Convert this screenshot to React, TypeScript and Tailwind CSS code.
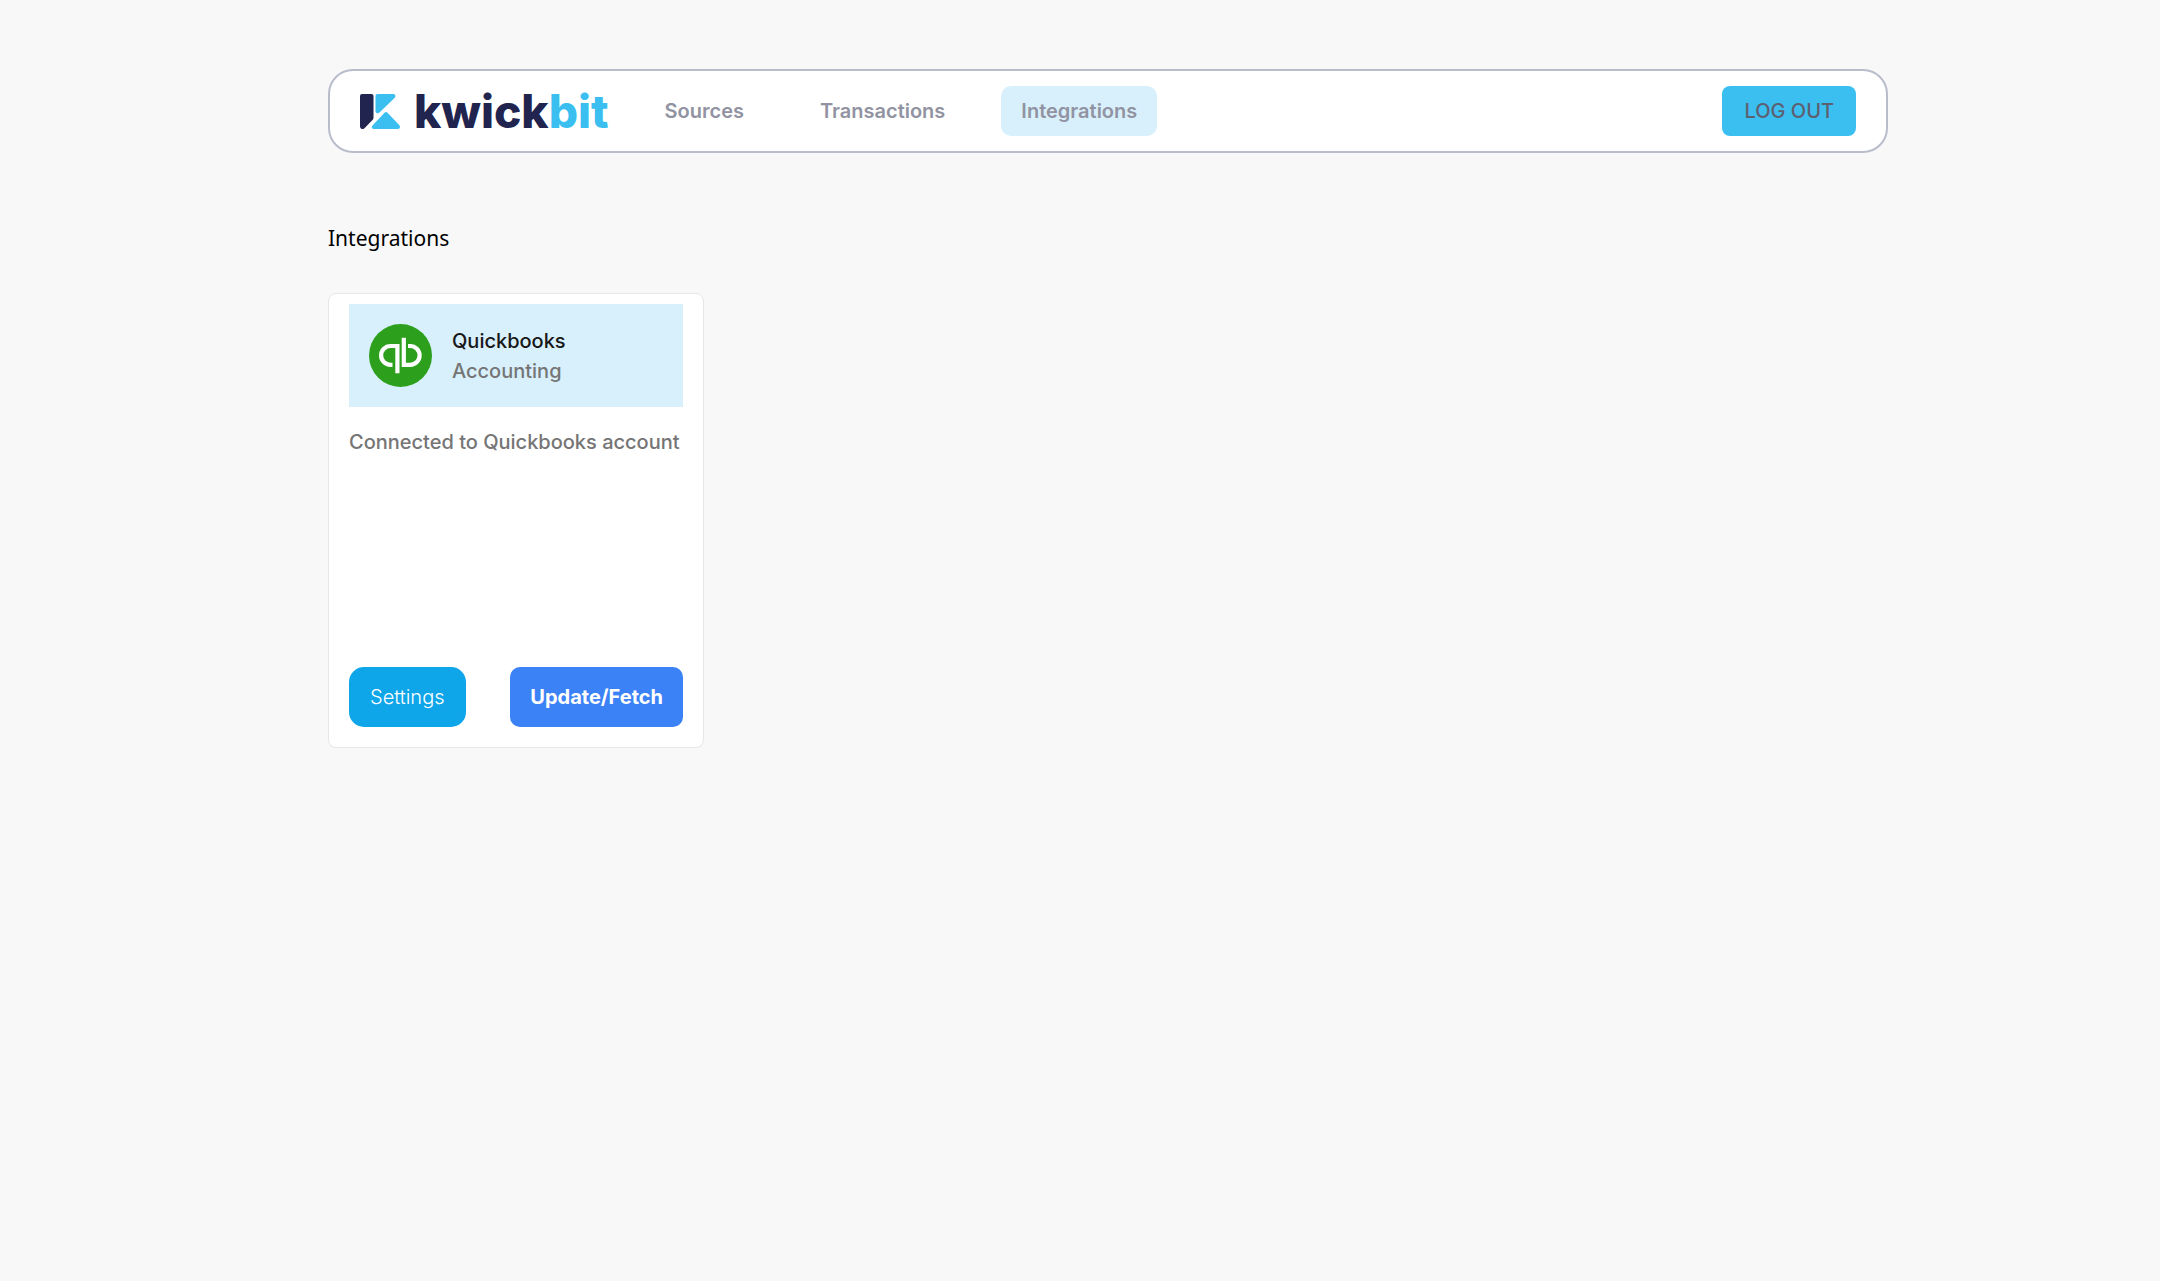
import React from 'react';

const navItems = [
  { label: 'Sources', active: false },
  { label: 'Transactions', active: false },
  { label: 'Integrations', active: true },
];

function Logo() {
  return (
    <a href="#" aria-label="kwickbit" className="flex items-center gap-3.5">
      <svg width="40" height="35" viewBox="0 0 40 35" aria-hidden="true">
        <path d="M2 0H11.5Q13.5 0 13.5 2V23.5Q13.5 25 12.5 26L4.5 34.3Q2.8 35.6 1.2 34.8Q0 34 0 32.5V2Q0 0 2 0Z" fill="#21244e" />
        <path d="M17.5 0H33.5Q35.2 .2 35.4 1.8Q35.4 3 34.5 3.9L19.5 18.6Q18 19.8 16.6 19Q15.5 18.3 15.5 17V2Q15.5 0 17.5 0Z" fill="#3bbff0" />
        <path d="M24.5 18.7Q26 17.5 27.5 18.7L39.2 31Q40.4 32.3 39.8 33.7Q39.2 35 37.8 35H13.7Q12 34.8 11.8 33.5Q11.7 32.4 12.7 31.3Z" fill="#3bbff0" />
      </svg>
      <span className="font-[Inter,sans-serif] text-[46px] leading-[48px] font-extrabold text-[#21244e]">
        kwick<span className="text-[#3bbff0]">bit</span>
      </span>
    </a>
  );
}

function QuickbooksMark() {
  return (
    <svg width="63" height="63" viewBox="0 0 63 63" aria-hidden="true">
      <circle cx="31.5" cy="31.5" r="31.5" fill="#2ca01c" />
      <g fill="none" stroke="#fff" strokeWidth="4.2">
        <path d="M23.5 40.8H21.5A9.4 9.4 0 0 1 21.5 22H28.4V49.3" />
        <path d="M39 22H41.2A9.4 9.4 0 0 1 41.2 40.8H34.8V13.7" />
      </g>
    </svg>
  );
}

export default function App() {
  return (
    <div className="min-h-screen bg-[#f8f8f8] pt-[69px] pr-[272px] pl-[328px] font-[Inter,sans-serif] text-[20px] leading-[30px]">
      <header className="flex h-[84px] items-center justify-between rounded-[25px] border-2 border-[#b9bccb] bg-white px-[30px]">
        <div className="flex items-center gap-9">
          <Logo />
          <nav className="flex gap-9">
            {navItems.map((item) => (
              <a
                key={item.label}
                href="#"
                className={
                  item.active
                    ? 'rounded-[10px] bg-[#d8f0fc] px-5 py-2.5 font-semibold text-[#9193a2]'
                    : 'rounded-[10px] px-5 py-2.5 font-semibold text-[#9193a2]'
                }
              >
                {item.label}
              </a>
            ))}
          </nav>
        </div>
        <button type="button" className="rounded-[8px] bg-[#3bbff0] px-[22px] py-2.5 font-medium text-[#5d6070]">
          LOG OUT
        </button>
      </header>

      <main>
        <h1 className="mt-[70px] font-['Noto_Sans',sans-serif] text-[21px] text-black">Integrations</h1>
        <section className="mt-10 flex h-[455px] w-[376px] flex-col rounded-[8px] border border-[#e5e7eb] bg-white px-5 pt-2.5 pb-5">
          <div className="flex items-center gap-5 bg-[#d8f0fc] p-5">
            <QuickbooksMark />
            <div className="font-medium">
              <h2 className="text-[#171717]">Quickbooks</h2>
              <p className="text-[#757575]">Accounting</p>
            </div>
          </div>
          <p className="mt-5 font-medium whitespace-nowrap text-[#757575]">Connected to Quickbooks account</p>
          <div className="mt-auto flex justify-between">
            <button type="button" className="rounded-[15px] bg-[#0ea5e9] px-[21px] py-[15px] font-light text-white">
              Settings
            </button>
            <button type="button" className="rounded-[10px] bg-[#3b82f6] px-5 py-[15px] font-bold text-white">
              Update/Fetch
            </button>
          </div>
        </section>
      </main>
    </div>
  );
}
